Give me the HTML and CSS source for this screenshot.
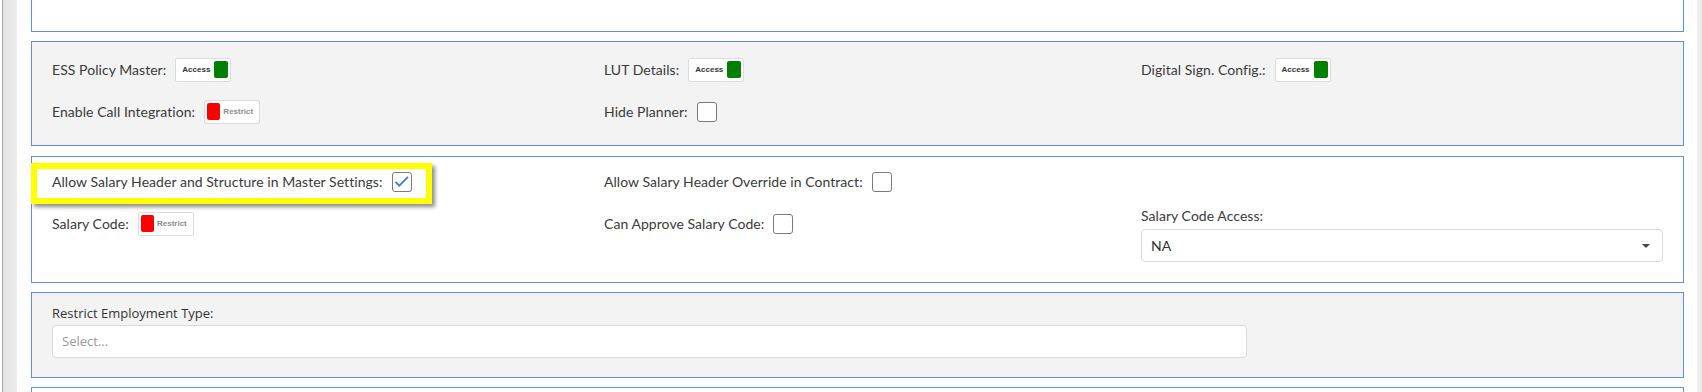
FILE: index.html
```html
<!DOCTYPE html>
<html>
<head>
    <title>Settings</title>
    <link rel="stylesheet" href="styles.css">
</head>
<body>
    <div class="frame">
        <div class="side-strip"></div>

        <div class="content">
            <div class="panel panel-cut"></div>

            <div class="panel panel-grey panel-access">
                <div class="col">
                    <div class="field">
                        <span class="label">ESS Policy Master:</span>
                        <span class="toggle toggle-on"><span class="toggle-text">Access</span><span class="toggle-knob"></span></span>
                    </div>
                    <div class="field">
                        <span class="label">Enable Call Integration:</span>
                        <span class="toggle toggle-off"><span class="toggle-knob"></span><span class="toggle-text">Restrict</span></span>
                    </div>
                </div>
                <div class="col">
                    <div class="field">
                        <span class="label">LUT Details:</span>
                        <span class="toggle toggle-on"><span class="toggle-text">Access</span><span class="toggle-knob"></span></span>
                    </div>
                    <div class="field">
                        <span class="label">Hide Planner:</span>
                        <span class="check"></span>
                    </div>
                </div>
                <div class="col">
                    <div class="field">
                        <span class="label">Digital Sign. Config.:</span>
                        <span class="toggle toggle-on"><span class="toggle-text">Access</span><span class="toggle-knob"></span></span>
                    </div>
                </div>
            </div>

            <div class="panel panel-salary">
                <!-- annotation box drawn over the first setting -->
                <span class="highlight"></span>
                <div class="col">
                    <div class="field">
                        <span class="label">Allow Salary Header and Structure in Master Settings:</span>
                        <span class="check checked">
                            <svg width="20" height="20" viewBox="0 0 20 20"><path d="M3.5 9.8 L7.3 13.6 L16 4.8" fill="none" stroke="#3b7fd4" stroke-width="1.8"/></svg>
                        </span>
                    </div>
                    <div class="field">
                        <span class="label">Salary Code:</span>
                        <span class="toggle toggle-off"><span class="toggle-knob"></span><span class="toggle-text">Restrict</span></span>
                    </div>
                </div>
                <div class="col">
                    <div class="field">
                        <span class="label">Allow Salary Header Override in Contract:</span>
                        <span class="check"></span>
                    </div>
                    <div class="field">
                        <span class="label">Can Approve Salary Code:</span>
                        <span class="check"></span>
                    </div>
                </div>
                <div class="col col-select">
                    <span class="label">Salary Code Access:</span>
                    <div class="select-box">
                        <span>NA</span>
                        <span class="caret"></span>
                    </div>
                </div>
            </div>

            <div class="panel panel-grey panel-employment">
                <label class="label-plain">Restrict Employment Type:</label>
                <div class="multi-select">Select...</div>
            </div>

            <div class="panel panel-next"></div>
        </div>

        <div class="scroll-strip"></div>
    </div>
</body>
</html>
```

FILE: styles.css
```css
body {
    margin: 0;
    padding: 0;
    background: #ffffff;
    font-family: Lato, "Open Sans", sans-serif;
    color: #3a3a3a;
    overflow: hidden;
    height: 392px;
}

.frame {
    display: flex;
    height: 392px;
}

.side-strip {
    width: 14px;
    margin-left: 2px;
    border-left: 1px solid #a9a9a9;
    background: linear-gradient(90deg, #e3e3e3, #ededed);
    flex-shrink: 0;
}

.scroll-strip {
    width: 5px;
    background: #eeeeee;
    flex-shrink: 0;
}

.content {
    flex: 1;
    padding: 0 13px 0 14px;
}

.panel {
    border: 1px solid #5a90e8;
    background: #ffffff;
    margin-bottom: 9px;
    box-sizing: border-box;
    position: relative;
}

.panel-grey {
    background: #f3f3f3;
}

.panel-cut {
    border-top: none;
    height: 32px;
}

.panel-next {
    height: 20px;
    border-bottom: none;
}

.panel-access,
.panel-salary {
    display: grid;
    grid-template-columns: 552px 537px 1fr;
    padding: 16px 20px 22px 20px;
}

.panel-salary {
    padding-top: 13px;
    padding-bottom: 20px;
    margin-top: 10px;
}

.col {
    display: flex;
    flex-direction: column;
    gap: 19px;
}

.field {
    display: flex;
    align-items: center;
    height: 23px;
    gap: 9px;
}

.label {
    font-size: 14px;
    line-height: 18px;
    letter-spacing: 0.05px;
    white-space: nowrap;
}

.toggle {
    display: flex;
    align-items: center;
    justify-content: space-between;
    width: 56px;
    height: 24px;
    box-sizing: border-box;
    padding: 2px;
    background: #ffffff;
    border: 1px solid #dcdcdc;
    border-radius: 2px;
    font-family: "Liberation Sans", Arial, sans-serif;
    font-size: 8px;
    font-weight: bold;
}

.toggle-on .toggle-text {
    color: #333333;
    padding-left: 4px;
}

.toggle-off .toggle-text {
    color: #8c8c8c;
    padding-right: 4px;
}

.toggle-knob {
    width: 14px;
    height: 17px;
    border-radius: 2px;
}

.toggle-on .toggle-knob {
    background: #008000;
}

.toggle-off .toggle-knob {
    background: #ff0000;
    width: 13px;
}

.check {
    width: 20px;
    height: 20px;
    box-sizing: border-box;
    border: 1px solid #7a7a7a;
    border-radius: 3px;
    background: #ffffff;
    display: inline-block;
    position: relative;
}

.check svg {
    position: absolute;
    left: -1px;
    top: -1px;
}

.col-select {
    gap: 4px;
    padding-top: 37px;
}

.select-box {
    display: flex;
    align-items: center;
    justify-content: space-between;
    height: 33px;
    box-sizing: border-box;
    padding: 0 12px 0 9px;
    background: #ffffff;
    border: 1px solid #dadada;
    border-radius: 4px;
    font-size: 14px;
    color: #333333;
}

.caret {
    width: 0;
    height: 0;
    border-left: 4px solid transparent;
    border-right: 4px solid transparent;
    border-top: 4px solid #444444;
}

.highlight {
    position: absolute;
    left: -1px;
    top: 6px;
    width: 401px;
    height: 41px;
    box-sizing: border-box;
    border: 6px solid #ffff00;
    box-shadow: 3px 3px 4px rgba(0, 0, 0, 0.45);
    pointer-events: none;
}

.panel-employment {
    padding: 11px 20px 19px 20px;
}

.label-plain {
    display: block;
    font-family: "Open Sans", sans-serif;
    font-size: 13px;
    line-height: 18px;
    color: #333333;
    margin-bottom: 3px;
}

.multi-select {
    width: 1195px;
    height: 33px;
    box-sizing: border-box;
    padding: 0 9px;
    background: #ffffff;
    border: 1px solid #dadada;
    border-radius: 4px;
    font-family: "Open Sans", sans-serif;
    font-size: 13px;
    line-height: 31px;
    color: #999999;
}
```
